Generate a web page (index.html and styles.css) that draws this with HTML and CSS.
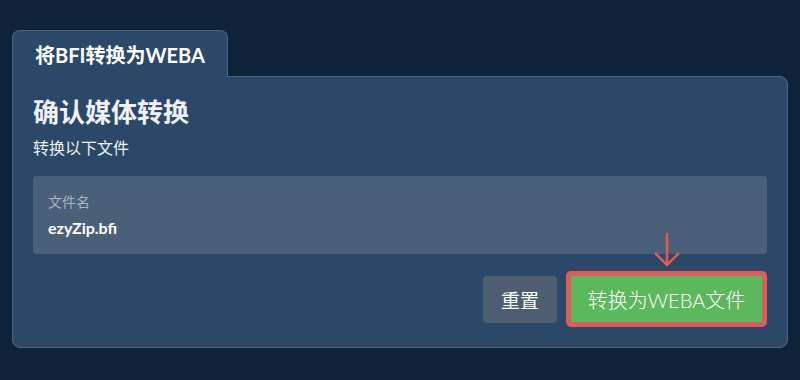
FILE: index.html
```html
<!DOCTYPE html>
<html lang="zh">
<head>
<meta charset="utf-8">
<title>将BFI转换为WEBA</title>
<link rel="stylesheet" href="styles.css">
</head>
<body>
<div class="wrap">
  <div class="tab">将BFI转换为WEBA</div>
  <div class="card">
    <h1 class="title">确认媒体转换</h1>
    <p class="subtitle">转换以下文件</p>
    <div class="file">
      <div class="file-label">文件名</div>
      <div class="file-name">ezyZip.bfi</div>
    </div>
    <div class="actions">
      <button class="btn btn-reset">重置</button>
      <div class="go">
        <svg class="arrow" width="30" height="36" viewBox="0 0 30 36">
          <path d="M15 1 V33 M3 21 L15 33 L27 21" fill="none" stroke="#e05a55" stroke-width="2.6"/>
        </svg>
        <button class="btn btn-convert">转换为WEBA文件</button>
      </div>
    </div>
  </div>
</div>
</body>
</html>
```

FILE: styles.css
```css
html, body {
  margin: 0;
  padding: 0;
  background: #0f233a;
  font-family: Lato, "Noto Sans CJK SC", sans-serif;
}
.wrap {
  padding: 30px 12px 0 12px;
  width: 776px;
}
.tab {
  display: inline-block;
  position: relative;
  z-index: 2;
  box-sizing: border-box;
  height: 47px;
  margin-bottom: -1px;
  padding: 0 22px 0 22px;
  background: #2c4869;
  border: 1px solid #4a6685;
  border-bottom: none;
  border-radius: 8px 8px 0 0;
  color: #ffffff;
  font-weight: 700;
  font-size: 20px;
  line-height: 48px;
}
.card {
  position: relative;
  z-index: 1;
  background: #2c4869;
  border: 1px solid #4a6685;
  border-radius: 0 8px 8px 8px;
  padding: 21px 20px 20px 20px;
}
.title {
  margin: 0;
  font-size: 26px;
  line-height: 28px;
  font-weight: 700;
  color: #eef1f5;
}
.subtitle {
  margin: 12px 0 0 0;
  font-size: 16px;
  line-height: 20px;
  color: #eef1f5;
}
.file {
  margin-top: 18px;
  background: #4a6079;
  border-radius: 4px;
  padding: 17px 15px 16px 15px;
}
.file-label {
  font-size: 14px;
  line-height: 18px;
  color: #a9b4c1;
}
.file-name {
  margin-top: 7px;
  font-size: 16px;
  line-height: 20px;
  font-weight: 700;
  color: #ffffff;
}
.actions {
  margin-top: 17px;
  display: flex;
  justify-content: flex-end;
  align-items: center;
  gap: 9px;
}
.btn {
  font-family: Lato, "Noto Sans CJK SC", sans-serif;
  font-size: 19px;
  color: #ffffff;
  border-radius: 4px;
  cursor: pointer;
}
.btn-reset {
  width: 74px;
  height: 47px;
  border: none;
  background: #4d5e70;
  padding: 0;
}
.go {
  position: relative;
}
.arrow {
  position: absolute;
  left: 86px;
  top: -39px;
}
.btn-convert {
  display: block;
  width: 201px;
  height: 56px;
  border: 5px solid #df5d58;
  background: #5cb85c;
  padding: 0;
  border-radius: 5px;
  font-size: 20px;
  font-weight: 300;
}
```
